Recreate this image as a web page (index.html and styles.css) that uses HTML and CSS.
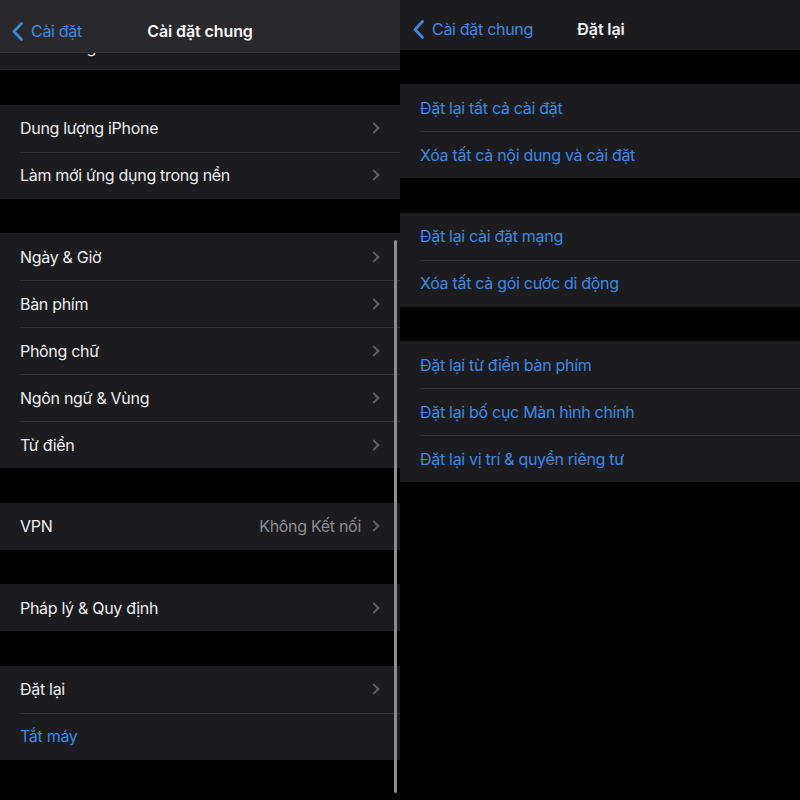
FILE: index.html
```html
<!DOCTYPE html>
<html lang="vi">
<head>
<meta charset="utf-8">
<title>Cài đặt</title>
<link rel="stylesheet" href="styles.css">
</head>
<body>
<div class="screen">
  <section class="panel panel-left">
    <header class="nav nav-left">
      <div class="back"><svg class="back-icon" viewBox="0 0 11 19" width="11" height="19"><path d="M9.5 1.5 L2 9.5 L9.5 17.5" fill="none" stroke="currentColor" stroke-width="2.6" stroke-linecap="round" stroke-linejoin="round"/></svg><span>Cài đặt</span></div>
      <div class="title">Cài đặt chung</div>
    </header>
    <div class="list">
      <div class="group group-partial">
        <div class="row row-partial"><span class="peek">Hình trong hình</span></div>
      </div>
      <div class="group">
        <div class="row"><span class="label">Dung lượng iPhone</span><span class="chev"></span></div>
        <div class="row"><span class="label">Làm mới ứng dụng trong nền</span><span class="chev"></span></div>
      </div>
      <div class="group">
        <div class="row"><span class="label">Ngày &amp; Giờ</span><span class="chev"></span></div>
        <div class="row"><span class="label">Bàn phím</span><span class="chev"></span></div>
        <div class="row"><span class="label">Phông chữ</span><span class="chev"></span></div>
        <div class="row"><span class="label">Ngôn ngữ &amp; Vùng</span><span class="chev"></span></div>
        <div class="row"><span class="label">Từ điển</span><span class="chev"></span></div>
      </div>
      <div class="group">
        <div class="row"><span class="label">VPN</span><span class="value">Không Kết nối</span><span class="chev"></span></div>
      </div>
      <div class="group">
        <div class="row"><span class="label">Pháp lý &amp; Quy định</span><span class="chev"></span></div>
      </div>
      <div class="group">
        <div class="row"><span class="label">Đặt lại</span><span class="chev"></span></div>
        <div class="row"><span class="label link">Tắt máy</span></div>
      </div>
    </div>
    <div class="scrollbar"></div>
  </section>
  <section class="panel panel-right">
    <header class="nav nav-right">
      <div class="back"><svg class="back-icon" viewBox="0 0 11 19" width="11" height="19"><path d="M9.5 1.5 L2 9.5 L9.5 17.5" fill="none" stroke="currentColor" stroke-width="2.6" stroke-linecap="round" stroke-linejoin="round"/></svg><span>Cài đặt chung</span></div>
      <div class="title">Đặt lại</div>
    </header>
    <div class="list list-right">
      <div class="group">
        <div class="row"><span class="label link">Đặt lại tất cả cài đặt</span></div>
        <div class="row"><span class="label link">Xóa tất cả nội dung và cài đặt</span></div>
      </div>
      <div class="group">
        <div class="row"><span class="label link">Đặt lại cài đặt mạng</span></div>
        <div class="row"><span class="label link">Xóa tất cả gói cước di động</span></div>
      </div>
      <div class="group">
        <div class="row"><span class="label link">Đặt lại từ điển bàn phím</span></div>
        <div class="row"><span class="label link">Đặt lại bố cục Màn hình chính</span></div>
        <div class="row"><span class="label link">Đặt lại vị trí &amp; quyền riêng tư</span></div>
      </div>
    </div>
  </section>
</div>
</body>
</html>
```

FILE: styles.css
```css
* { box-sizing: border-box; }
html, body { margin: 0; padding: 0; background: #000; }
body {
  font-family: Inter, "Noto Sans", "Liberation Sans", sans-serif;
  color: #f2f2f7;
  width: 800px;
  height: 800px;
  overflow: hidden;
}
.screen { display: flex; width: 800px; height: 800px; }
.panel { position: relative; width: 400px; height: 800px; background: #000; display: flex; flex-direction: column; }

.nav { position: relative; display: flex; align-items: center; flex-shrink: 0; }
.nav-left { height: 53px; background: #29292b; border-bottom: 1px solid #333335; padding: 10px 0 0 12px; }
.nav-right { height: 50px; background: #1c1c1e; padding: 8px 0 0 13px; }
.back { display: flex; align-items: center; gap: 8px; color: #3a8ae6; font-size: 16px; letter-spacing: -0.3px; }
.back-icon { display: block; }
.title {
  position: absolute; left: 0; right: 0; top: 0; bottom: 0;
  display: flex; align-items: center; justify-content: center;
  font-weight: 600; font-size: 16px; letter-spacing: -0.1px; color: #f5f5f7; pointer-events: none;
}
.nav-left .title { padding-top: 10px; }
.nav-right .title { padding-top: 8px; padding-left: 2px; }

.list { display: flex; flex-direction: column; gap: 34.5px; }
.list-right { padding-top: 34px; gap: 34.5px; }
.group { background: #1c1c1e; }
.row {
  position: relative;
  height: 47px;
  display: flex; align-items: center;
  padding: 0 20px;
  font-size: 16px;
  letter-spacing: -0.3px;
  color: #ececf0;
}
.row + .row::before {
  content: ""; position: absolute; left: 20px; right: 0; top: 0;
  height: 1px; background: #333336;
}
.label { flex: 1; white-space: nowrap; }
.link { color: #3a8ae6; }
.value { color: #8e8e93; margin-right: 9px; }
.chev {
  width: 8px; height: 8px;
  border-top: 2px solid #5d5d62; border-right: 2px solid #5d5d62;
  transform: rotate(45deg);
  margin-right: 2px;
}
.group-partial { border-bottom: 1px solid #2a2a2c; }
.row-partial { height: 16px; overflow: hidden; align-items: flex-start; }
.peek { display: block; line-height: 16px; margin-top: -14px; white-space: nowrap; }

.scrollbar {
  position: absolute; left: 394px; top: 240px;
  width: 3px; height: 553px; border-radius: 2px;
  background: #8d8d90;
}
```
